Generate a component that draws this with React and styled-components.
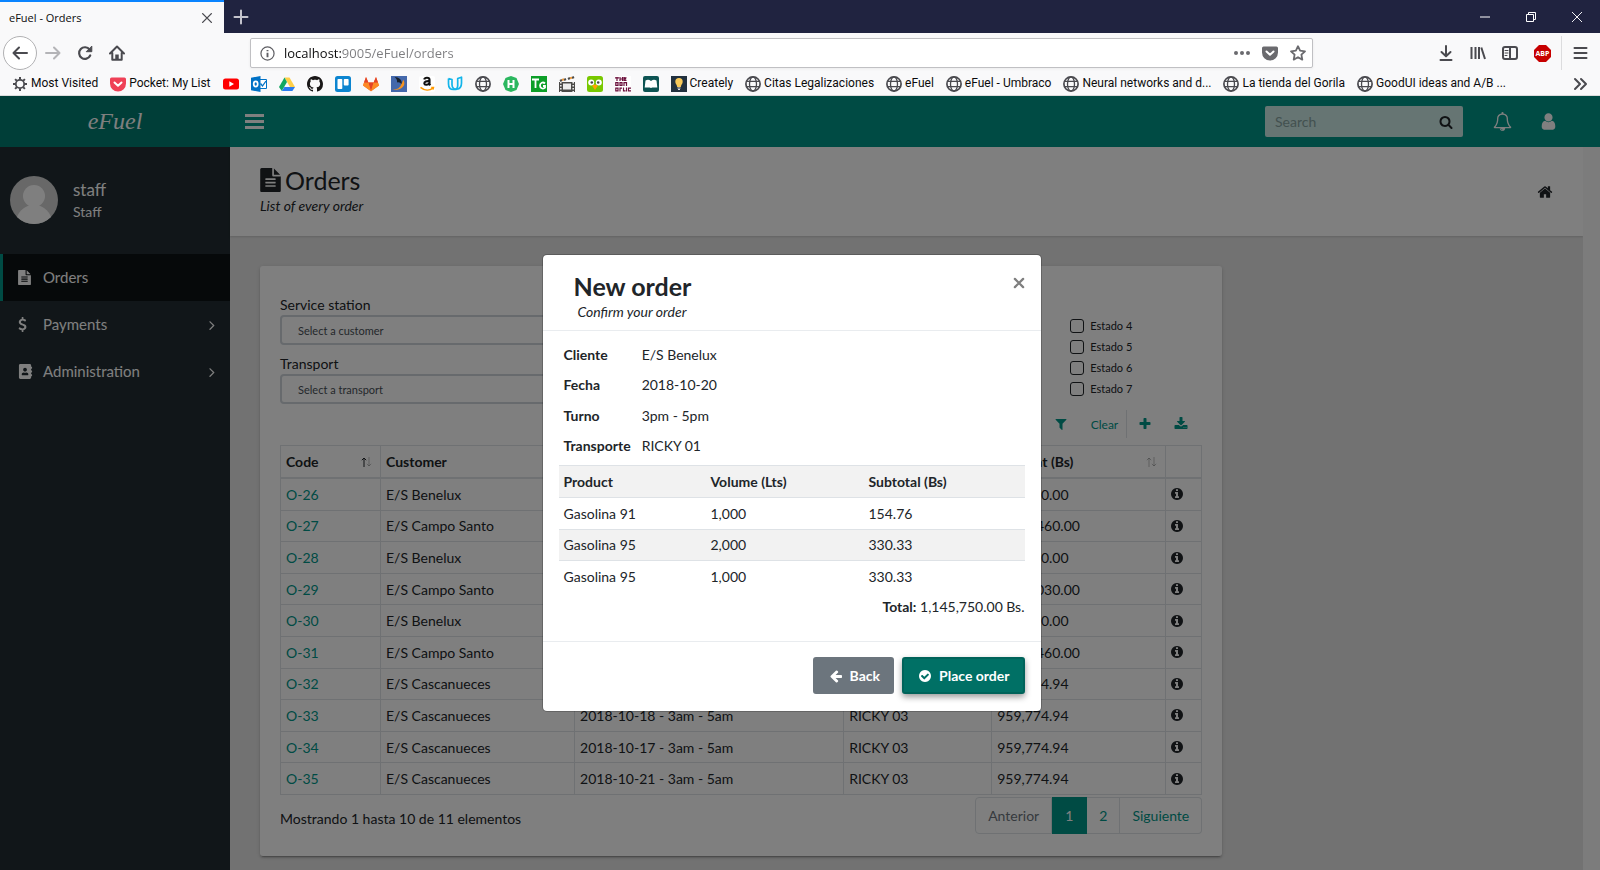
import React from "react";
import styled, { createGlobalStyle, css } from "styled-components";
import { FaAddressBook } from "react-icons/fa";

const GlobalStyle = createGlobalStyle`
  *, *::before, *::after { box-sizing: border-box; }
  html, body { margin: 0; }
  body {
    font-family: Lato, "Liberation Sans", sans-serif;
    font-size: 14px;
    line-height: 21px;
    color: #212529;
    overflow: hidden;
  }
  button, input, select { font: inherit; color: inherit; margin: 0; }
  button { background: none; border: 0; padding: 0; cursor: pointer; }
  a { text-decoration: none; color: inherit; }
  h1, h2, p { margin: 0; }
`;

/* ---------- icons ---------- */

const PATHS = {
  bell: "M912 1696q0-16-16-16-59 0-101.5-42.5t-42.5-101.5q0-16-16-16t-16 16q0 73 51.5 124.5t124.5 51.5q16 0 16-16zm-666-288h1300q-266-300-266-832 0-51-24-105t-69-103-121.5-80.5-169.5-31.5-169.5 31.5-121.5 80.5-69 103-24 105q0 532-266 832zm1482 0q0 52-38 90t-90 38h-448q0 106-75 181t-181 75-181-75-75-181h-448q-52 0-90-38t-38-90q50-42 91-88t85-119.5 74.5-158.5 50-206 19.5-260q0-152 117-282.5t307-158.5q-8-19-8-39 0-40 28-68t68-28 68 28 28 68q0 20-8 39 190 28 307 158.5t117 282.5q0 139 19.5 260t50 206 74.5 158.5 85 119.5 91 88z",
  user: "M1536 1399q0 109-62.5 187t-150.5 78h-854q-88 0-150.5-78t-62.5-187q0-85 8.5-160.5t31.5-152 58.5-131 94-89 134.5-34.5q131 128 313 128t313-128q76 0 134.5 34.5t94 89 58.5 131 31.5 152 8.5 160.5zm-256-887q0 159-112.5 271.5t-271.5 112.5-271.5-112.5-112.5-271.5 112.5-271.5 271.5-112.5 271.5 112.5 112.5 271.5z",
  search: "M1216 832q0-185-131.5-316.5t-316.5-131.5-316.5 131.5-131.5 316.5 131.5 316.5 316.5 131.5 316.5-131.5 131.5-316.5zm512 832q0 52-38 90t-90 38q-54 0-90-38l-343-342q-179 124-399 124-143 0-273.5-55.5t-225-150-150-225-55.5-273.5 55.5-273.5 150-225 225-150 273.5-55.5 273.5 55.5 225 150 150 225 55.5 273.5q0 220-124 399l343 343q37 37 37 90z",
  home: "M1472 992v480q0 26-19 45t-45 19h-384v-384h-256v384h-384q-26 0-45-19t-19-45v-480q0-1 .5-3t.5-3l575-474 575 474q1 2 1 6zm223-69l-62 74q-8 9-21 11h-3q-13 0-21-7l-692-577-692 577q-12 8-24 7-13-2-21-11l-62-74q-8-10-7-23.5t11-21.5l719-599q32-26 76-26t76 26l244 204v-195q0-14 9-23t23-9h192q14 0 23 9t9 23v408l219 182q10 8 11 21.5t-7 23.5z",
  file: "M1596 476q14 14 28 36h-472v-472q22 14 36 28zm-476 164h544v1056q0 40-28 68t-68 28h-1344q-40 0-68-28t-28-68v-1600q0-40 28-68t68-28h800v544q0 40 28 68t68 28zm160 736v-64q0-14-9-23t-23-9h-704q-14 0-23 9t-9 23v64q0 14 9 23t23 9h704q14 0 23-9t9-23zm0-256v-64q0-14-9-23t-23-9h-704q-14 0-23 9t-9 23v64q0 14 9 23t23 9h704q14 0 23-9t9-23zm0-256v-64q0-14-9-23t-23-9h-704q-14 0-23 9t-9 23v64q0 14 9 23t23 9h704q14 0 23-9t9-23z",
  info: "M1152 1376v-160q0-14-9-23t-23-9h-96v-512q0-14-9-23t-23-9h-320q-14 0-23 9t-9 23v160q0 14 9 23t23 9h96v320h-96q-14 0-23 9t-9 23v160q0 14 9 23t23 9h448q14 0 23-9t9-23zm-128-896v-160q0-14-9-23t-23-9h-192q-14 0-23 9t-9 23v160q0 14 9 23t23 9h192q14 0 23-9t9-23zm640 416q0 209-103 385.5t-279.5 279.5-385.5 103-385.5-103-279.5-279.5-103-385.5 103-385.5 279.5-279.5 385.5-103 385.5 103 279.5 279.5 103 385.5z",
  angle: "M1171 960q0 13-10 23l-466 466q-10 10-23 10t-23-10l-50-50q-10-10-10-23t10-23l393-393-393-393q-10-10-10-23t10-23l50-50q10-10 23-10t23 10l466 466q10 10 10 23z",
  filter: "M1595 295q17 41-14 70l-493 493v742q0 42-39 59-13 5-25 5-27 0-45-19l-256-256q-19-19-19-45v-486l-493-493q-31-29-14-70 17-39 59-39h1280q42 0 59 39z",
  plus: "M1600 736v192q0 40-28 68t-68 28h-416v416q0 40-28 68t-68 28h-192q-40 0-68-28t-28-68v-416h-416q-40 0-68-28t-28-68v-192q0-40 28-68t68-28h416v-416q0-40 28-68t68-28h192q40 0 68 28t28 68v416h416q40 0 68 28t28 68z",
  download: "M1344 1344q0-26-19-45t-45-19-45 19-19 45 19 45 45 19 45-19 19-45zm256 0q0-26-19-45t-45-19-45 19-19 45 19 45 45 19 45-19 19-45zm128-224v320q0 40-28 68t-68 28h-1472q-40 0-68-28t-28-68v-320q0-40 28-68t68-28h465l135 136q58 56 136 56t136-56l136-136h464q40 0 68 28t28 68zm-325-569q17 41-14 70l-448 448q-18 19-45 19t-45-19l-448-448q-31-29-14-70 17-39 59-39h256v-448q0-26 19-45t45-19h256q26 0 45 19t19 45v448h256q42 0 59 39z",
  arrowLeft: "M1664 896v128q0 53-32.5 90.5t-84.5 37.5h-704l293 294q38 36 38 90t-38 90l-75 76q-37 37-90 37-52 0-91-37l-651-652q-37-37-37-90 0-52 37-91l651-650q38-38 91-38 52 0 90 38l75 74q38 38 38 91t-38 91l-293 293h704q52 0 84.5 37.5t32.5 90.5z",
  check: "M1412 734q0-28-18-46l-91-90q-19-19-45-19t-45 19l-408 407-226-226q-19-19-45-19t-45 19l-91 90q-18 18-18 46 0 27 18 45l362 362q19 19 45 19 27 0 46-19l543-543q18-18 18-45zm252 162q0 209-103 385.5t-279.5 279.5-385.5 103-385.5-103-279.5-279.5-103-385.5 103-385.5 279.5-279.5 385.5-103 385.5 103 279.5 279.5 103 385.5z",
  dollar: "M1362 1185q0 153-99.5 263.5t-258.5 136.5v175q0 14-9 23t-23 9h-135q-13 0-22.5-9.5t-9.5-22.5v-175q-66-9-127.5-31t-101.5-44.5-74-48-46.5-37.5-17.5-18q-17-21-2-41l103-135q7-10 23-12 15-2 24 9l2 2q113 99 243 125 37 8 74 8 81 0 142.5-43t61.5-122q0-28-15-53t-33.5-42-58.5-37.5-66-32-80-32.5q-39-16-61.5-25t-61.5-26.5-62.5-31-56.5-35.5-53.5-42.5-43.5-49-35.5-58-21-66.5-8.5-78q0-138 98-242t255-134v-180q0-13 9.5-22.5t22.5-9.5h135q14 0 23 9t9 23v176q57 6 110.5 23t87 33.5 63.5 37.5 39 29 15 14q17 18 5 38l-81 146q-8 15-23 16-14 3-27-7-3-3-14.5-12t-39-26.5-58.5-32-74.5-26-85.5-11.5q-95 0-155 43t-60 111q0 26 8.5 48t29.5 41.5 39.5 33 56 31 60.5 27 70 27.5q53 20 81 31.5t76 35 75.5 42.5 62 50 53 63.5 31.5 76.5 13 94z",
};

function Icon({ name, size = 14, box = "0 0 1792 1792", width }) {
  return (
    <svg width={width || size} height={size} viewBox={box} fill="currentColor" aria-hidden="true">
      <path d={PATHS[name]} />
    </svg>
  );
}

const Line = ({ children, size = 16, w = 2, ...rest }) => (
  <svg width={size} height={size} viewBox="0 0 16 16" fill="none" stroke="currentColor" strokeWidth={w} strokeLinecap="round" strokeLinejoin="round" aria-hidden="true" {...rest}>
    {children}
  </svg>
);

const Fav = ({ children }) => (
  <svg width="16" height="16" viewBox="0 0 16 16" aria-hidden="true">{children}</svg>
);

const Globe = () => (
  <Fav>
    <g fill="none" stroke="#4a4a4f" strokeWidth="1.7">
      <circle cx="8" cy="8" r="7.1" />
      <ellipse cx="8" cy="8" rx="3.5" ry="7.1" strokeWidth="1.3" />
      <path d="M1.6 5.4h12.8M1.6 10.6h12.8" strokeWidth="1.3" />
    </g>
  </Fav>
);

const Gear = () => (
  <Fav>
    <g fill="none" stroke="#4a4a4f">
      <circle cx="8" cy="8" r="4.2" strokeWidth="1.8" />
      <path strokeWidth="2" d="M8 1v2.6M8 12.4V15M1 8h2.6M12.4 8H15M3.1 3.1l1.8 1.8M11.1 11.1l1.8 1.8M3.1 12.9l1.8-1.8M11.1 4.9l1.8-1.8" />
    </g>
  </Fav>
);

const PocketShape = "M1.6 1.5h12.8A1.6 1.6 0 0 1 16 3.1v4.4a8 8 0 0 1-16 0V3.1a1.6 1.6 0 0 1 1.6-1.6z";

const BOOKMARKS = [
  { label: "Most Visited", icon: <Gear /> },
  { label: "Pocket: My List", icon: <Fav><path fill="#ef4056" d={PocketShape} /><path d="M4.5 6.5 8 9.8l3.5-3.3" fill="none" stroke="#fff" strokeWidth="2" strokeLinecap="round" strokeLinejoin="round" /></Fav> },
  { title: "YouTube", icon: <Fav><rect y="2.5" width="16" height="11" rx="2.5" fill="#f00" /><path d="M6.3 5.3v5.4L11 8z" fill="#fff" /></Fav> },
  { title: "Outlook", icon: <Fav><path d="M9 3.500h6.500v9H9" fill="#fff" stroke="#0072c6" /><path d="M9.500 7.500l2 2.500 3.500-5" fill="none" stroke="#0072c6" strokeWidth="1.300" /><path d="M0 1.800 9.500 0v16L0 14.200z" fill="#0072c6" /><ellipse cx="4.700" cy="8" rx="2" ry="2.600" fill="none" stroke="#fff" strokeWidth="1.700" /></Fav> },
  { title: "Drive", icon: <Fav><path d="M5.500 1.500h5L16 11h-5z" fill="#ffcf48" /><path d="M5.500 1.500 8 6l-5.200 9L0 11z" fill="#11a861" /><path d="M5.400 11H16l-2.600 4H2.800z" fill="#2a7bf0" /></Fav> },
  { title: "GitHub", icon: <Fav><path fill="#191717" d="M8 0C3.58 0 0 3.58 0 8c0 3.54 2.29 6.53 5.47 7.59.4.07.55-.17.55-.38 0-.19-.01-.82-.01-1.49-2.01.37-2.53-.49-2.69-.94-.09-.23-.48-.94-.82-1.13-.28-.15-.68-.52-.01-.53.63-.01 1.08.58 1.23.82.72 1.21 1.87.87 2.33.66.07-.52.28-.87.51-1.07-1.78-.2-3.64-.89-3.64-3.95 0-.87.31-1.59.82-2.15-.08-.2-.36-1.02.08-2.12 0 0 .67-.21 2.2.82.64-.18 1.32-.27 2-.27s1.36.09 2 .27c1.53-1.04 2.2-.82 2.2-.82.44 1.1.16 1.92.08 2.12.51.56.82 1.27.82 2.15 0 3.07-1.87 3.75-3.65 3.95.29.25.54.73.54 1.48 0 1.07-.01 1.93-.01 2.2 0 .21.15.46.55.38A8.01 8.01 0 0 0 16 8c0-4.42-3.58-8-8-8z" /></Fav> },
  { title: "Trello", icon: <Fav><rect width="16" height="16" rx="2.500" fill="#0c85d0" /><rect x="2.500" y="3" width="4.800" height="10" rx=".8" fill="#fff" /><rect x="8.800" y="3" width="4.800" height="6.500" rx=".8" fill="#fff" /></Fav> },
  { title: "GitLab", icon: <Fav><path d="M3 1 0 9.400 8 15.200l8-5.800L13 1l-2.400 5.600H5.400z" fill="#fc6d26" /><path d="M5.400 6.600h5.200L8 15.200z" fill="#e24329" /><path d="M0 9.400l1-2.900 4.400.1L8 15.200zM16 9.400l-1-2.900-4.400.1L8 15.200z" fill="#fc8a26" /><path d="M3 1 1 6.500h4.400zM13 1l2 5.500h-4.400z" fill="#e24329" /></Fav> },
  { title: "Forum", icon: <Fav><rect width="16" height="16" fill="#4468ab" /><path d="M3.500 1c4 0 8.500 3 7 7.500C9.500 6.500 8 6 6 6.500 6.500 4.500 5.500 2.500 3.500 1z" fill="#17202c" /><path d="M12 3.500c4 5-1 11.500-10.500 10.500 5-.5 8-2.500 9-6 .8-1.500 1.500-3 1.500-4.500z" fill="#f7941e" /></Fav> },
  { title: "Amazon", icon: <Fav><rect width="16" height="16" rx="2" fill="#fff" /><path d="M5.200 3.500c.5-2.300 5.300-2.300 5.300.3v4.400l.9 1M10.500 5.200C7.500 5 5.200 5.500 5.300 7.500c.2 1.900 3.900 1.700 5.200-.6" fill="none" stroke="#111" strokeWidth="2.100" /><path d="M1.500 11.400c4 3.300 9 3.400 12.500.8M12.200 11.500h2.300l-.5 2" fill="none" stroke="#f90" strokeWidth="1.500" /></Fav> },
  { title: "Udacity", icon: <Fav><path d="M1.500 2.500v5.200c0 4 2.300 5.800 5 5.800M1.500 2.500l3.500 1v5.300c0 6.500 9.500 6 9.500-1.800V1.200l-3.800 1.300v7.200c0 2.500-1.700 3.800-4.200 3.800" fill="none" stroke="#13b5ea" strokeWidth="1.700" strokeLinejoin="round" /></Fav> },
  { title: "Local site", icon: <Globe /> },
  { title: "HackerRank", icon: <Fav><path d="M8 0l5.500 2L16 8l-2.500 6L8 16l-5.500-2L0 8l2.500-6z" fill="#2bb75f" /><path d="M5.500 4v8M10.500 4v8M5.500 8h5" stroke="#fff" strokeWidth="2" /></Fav> },
  { title: "TG", icon: <Fav><rect width="16" height="16" fill="#0d9f28" /><path d="M1 3.500h7M4.500 3.500V12M14 7.500c-2-2-5-.7-5 2s3 4 5 2.200V10h-2" fill="none" stroke="#fff" strokeWidth="1.800" /></Fav> },
  { title: "Movies", icon: <Fav><path d="M0 6h16v10H0z" fill="#4b4a48" /><rect x="4" y="7.500" width="8" height="6" fill="#ececec" /><path d="M1.800 6v10M14.200 6v10" stroke="#f2f2f2" strokeWidth="1.500" strokeDasharray="1.500 1.500" /><path d="M1 5l2-1M5 4l2-1M9 3l2-1M13 2l2-1" stroke="#4b4a48" strokeWidth="2" /><path d="M3 4l2-.7M11 2.300l2-.7" stroke="#e8963a" strokeWidth="2" /></Fav> },
  { title: "Duolingo", icon: <Fav><rect width="16" height="16" rx="2.500" fill="#78c800" /><circle cx="4.200" cy="6.500" r="3" fill="#fff" /><circle cx="11.800" cy="6.500" r="3" fill="#fff" /><circle cx="4.800" cy="6.500" r="1.300" fill="#444" /><circle cx="11.200" cy="6.500" r="1.300" fill="#444" /><path d="M5 9.500 8 8.500l3 1L8 14z" fill="#ffa200" /></Fav> },
  { title: "The Book of Life", icon: <Fav><rect width="16" height="16" fill="#fff" /><path d="M0 1.800h4M2 1v4M5 1v4M7.500 1v4M5 3h2.500M9 1v4M9 1.800h2.500M9 4.300h2.500M9 3h2M.8 6v4M3 6v4M.8 6.600h2.200M.8 9.400h2.200M5 6v4M7 6v4M5 6.600h2M5 9.400h2M9 6v4M11.500 6v4M9 6.600h2.500M.8 11.500v4M3 11.500v4M.8 12.100h2.200M.8 14.900h2.200M5 11.500v4M5 12.100h2M8.500 11.500v4M8.500 14.900h2M11.500 11.500v4M13.500 11.500v4M13.500 12.100h2.500M13.500 14.900h2.500" fill="none" stroke="#6b0f3b" strokeWidth="1.200" /></Fav> },
  { title: "Reader", icon: <Fav><rect width="16" height="16" rx="2" fill="#0d5453" /><path d="M2.500 4.500c2-1 3.500-1 5.500.5 2-1.500 3.500-1.500 5.500-.5l.8 7h-5L8 12l-1.300-.5h-5z" fill="#fff" /></Fav> },
  { label: "Creately", icon: <Fav><rect width="16" height="16" fill="#22313f" /><path d="M8 2a3.700 3.700 0 0 1 3.700 3.700C11.700 8 10 8.500 9.800 11H6.200C6 8.500 4.300 8 4.300 5.700A3.700 3.700 0 0 1 8 2z" fill="#f7c95a" /><path d="M6.500 12h3M7 13.500h2" stroke="#ddd" /></Fav> },
  { label: "Citas Legalizaciones", icon: <Globe /> },
  { label: "eFuel", icon: <Globe /> },
  { label: "eFuel - Umbraco", icon: <Globe /> },
  { label: "Neural networks and d...", icon: <Globe /> },
  { label: "La tienda del Gorila", icon: <Globe /> },
  { label: "GoodUI ideas and A/B ...", icon: <Globe /> },
];

/* ---------- browser frame ---------- */

const Window = styled.div`
  display: flex;
  flex-direction: column;
  height: 100vh;
`;

const Chrome = styled.header`
  flex: none;
  display: flex;
  flex-direction: column;
  height: 96px;
  background: #f9f9fa;
  border-bottom: 1px solid #dcdcdc;
  font-family: "Open Sans", "Noto Sans", sans-serif;
  font-size: 12px;
  color: #0c0c0d;
`;

const TabStrip = styled.div`
  display: flex;
  height: 33px;
  background: #202340;
  color: #d2d2d8;
`;

const Tab = styled.div`
  display: flex;
  align-items: center;
  justify-content: space-between;
  width: 224px;
  padding: 0 9px;
  background: #f9f9fa;
  border-top: 2px solid #0a84ff;
  color: #0c0c0d;
  font-size: 11px;
`;

const ChromeButton = styled.button`
  display: flex;
  align-items: center;
  justify-content: center;
  flex: none;
  width: ${(p) => p.$w || 32}px;
  color: ${(p) => p.$color || "#4a4a4f"};
`;

const WindowButtons = styled.div`
  display: flex;
  margin-left: auto;
`;

const NavBar = styled.div`
  display: flex;
  align-items: center;
  height: 40px;
  padding: 0 3px;
`;

const NavGroup = styled.div`
  display: flex;
  align-items: center;
  width: ${(p) => p.$w}px;
  flex: none;
`;

const BackButton = styled(ChromeButton)`
  width: 34px;
  height: 34px;
  border: 1px solid #b1b1b3;
  border-radius: 50%;
  background: #fff;
`;

const AddressBar = styled.div`
  display: flex;
  align-items: center;
  flex: 1;
  height: 30px;
  padding: 0 0 0 9px;
  background: #fff;
  border: 1px solid #c0c0c3;
  border-radius: 2px;
  box-shadow: 0 1px 3px rgba(0, 0, 0, 0.06);
  color: #5f5f64;
`;

const Address = styled.input`
  flex: 1;
  min-width: 0;
  height: 24px;
  margin-left: 9px;
  padding: 0;
  border: 0;
  outline: 0;
  font-size: 13px;
  background: linear-gradient(90deg, #0c0c0d 57px, #7d7d80 57px);
  background-clip: text;
  -webkit-background-clip: text;
  -webkit-text-fill-color: transparent;
`;

const Tools = styled(NavGroup)`
  justify-content: flex-end;
`;

const Menu = styled(ChromeButton)`
  height: 34px;
  margin-left: 3px;
  border-left: 1px solid #dcdcde;
`;

const Bookmarks = styled.nav`
  display: flex;
  align-items: center;
  gap: 12px;
  height: 21px;
  padding: 0 12px;
  font-family: Roboto, "Open Sans", sans-serif;
`;

const Bookmark = styled.a`
  display: flex;
  align-items: center;
  gap: 3px;
  white-space: nowrap;
  svg { flex: none; }
`;

const MoreBookmarks = styled(ChromeButton)`
  margin-left: auto;
`;

function Browser() {
  return (
    <Chrome>
      <TabStrip>
        <Tab>
          eFuel - Orders
          <ChromeButton $w={16} aria-label="Close tab"><Line size={14} w={1.600}><path d="M3 3l10 10M13 3 3 13" /></Line></ChromeButton>
        </Tab>
        <ChromeButton $w={34} $color="#c4c4cd" aria-label="New tab"><Line size={16}><path d="M8 1.500v13M1.500 8h13" /></Line></ChromeButton>
        <WindowButtons>
          <ChromeButton $w={46} $color="#fff" aria-label="Minimize"><Line size={10} w={1.600}><path d="M0 8h16" /></Line></ChromeButton>
          <ChromeButton $w={46} $color="#fff" aria-label="Restore">
            <svg width="10" height="10" fill="none" stroke="currentColor" aria-hidden="true"><path d="M.5 2.500h7v7h-7zM2.500 2.500v-2h7v7h-2" /></svg>
          </ChromeButton>
          <ChromeButton $w={46} $color="#fff" aria-label="Close window"><Line size={10} w={1.500}><path d="M0 0l16 16M16 0 0 16" /></Line></ChromeButton>
        </WindowButtons>
      </TabStrip>
      <NavBar>
        <NavGroup $w={247}>
          <BackButton aria-label="Back"><Line><path d="M15 8H1.500M7 2.500 1.500 8 7 13.500" /></Line></BackButton>
          <ChromeButton $color="#b4b4b7" aria-label="Forward"><Line><path d="M1 8h13.500M9 2.500 14.500 8 9 13.500" /></Line></ChromeButton>
          <ChromeButton aria-label="Reload"><Line w={2.200}><path d="M13.200 10.500A5.800 5.800 0 1 1 12.600 4.600" /><path d="M14.800 1.500v5.200H9.600z" fill="currentColor" strokeWidth="1" /></Line></ChromeButton>
          <ChromeButton aria-label="Home"><Line><path d="M1 8.500 8 1.500l7 7M3.300 8v6.800h9.400V8" /><path d="M8 14v-4.500" strokeWidth="3.500" strokeLinecap="butt" /></Line></ChromeButton>
        </NavGroup>
        <AddressBar>
          <Line size={15} w={1.300}><circle cx="8" cy="8" r="7" /><path d="M8 7.200V12M8 4.200v1.500" strokeWidth="2" strokeLinecap="butt" /></Line>
          <Address aria-label="Address" defaultValue="localhost:9005/eFuel/orders" />
          <ChromeButton $w={28} $color="#6a6a6e" aria-label="Page actions"><svg width="16" height="16" fill="currentColor" aria-hidden="true"><circle cx="2" cy="8" r="2" /><circle cx="8" cy="8" r="2" /><circle cx="14" cy="8" r="2" /></svg></ChromeButton>
          <ChromeButton $w={28} $color="#6a6a6e" aria-label="Save to Pocket"><svg width="16" height="16" aria-hidden="true"><path fill="currentColor" d={PocketShape} /><path d="M4.500 6.500 8 9.800l3.500-3.300" fill="none" stroke="#fff" strokeWidth="2" strokeLinecap="round" strokeLinejoin="round" /></svg></ChromeButton>
          <ChromeButton $w={28} $color="#6a6a6e" aria-label="Bookmark page"><Line w={1.800}><path d="M8 1.200l2.100 4.500 4.900.6-3.600 3.400.9 4.900L8 12.200l-4.300 2.400.9-4.900L1 6.300l4.900-.6z" /></Line></ChromeButton>
        </AddressBar>
        <Tools $w={284}>
          <ChromeButton aria-label="Downloads"><Line><path d="M8 1v10M3.500 7 8 11.300 12.500 7M2.500 15h11" /></Line></ChromeButton>
          <ChromeButton aria-label="Library"><Line><path d="M1.500 2v12M5.500 2v12M9 2v12M11.300 2.500l3.700 11.500" strokeLinecap="butt" /></Line></ChromeButton>
          <ChromeButton aria-label="Sidebars"><Line w={2}><rect x="1" y="2" width="14" height="12" rx="2" /><path d="M8 2v12" /><path d="M3 5.500h3M3 8h3M3 10.500h2" strokeWidth="1" /></Line></ChromeButton>
          <ChromeButton aria-label="Adblock Plus">
            <svg width="17" height="17" viewBox="0 0 17 17" aria-hidden="true">
              <path d="M5 0h7l5 5v7l-5 5H5l-5-5V5z" fill="#c70000" />
              <text x="8.500" y="11" textAnchor="middle" fontSize="7" fontWeight="700" fontFamily="Open Sans, sans-serif" fill="#fff">ABP</text>
            </svg>
          </ChromeButton>
          <Menu $w={36} aria-label="Menu"><Line><path d="M2.500 3h12M2.500 8h12M2.500 13h12" /></Line></Menu>
        </Tools>
      </NavBar>
      <Bookmarks aria-label="Bookmarks">
        {BOOKMARKS.map((b, i) => (
          <Bookmark key={i} href="#" aria-label={b.label || b.title}>
            {b.icon}
            {b.label}
          </Bookmark>
        ))}
        <MoreBookmarks $w={16} aria-label="More bookmarks"><Line><path d="M3 3l5 5-5 5M9 3l5 5-5 5" /></Line></MoreBookmarks>
      </Bookmarks>
    </Chrome>
  );
}

/* ---------- application shell ---------- */

const Viewport = styled.div`
  position: relative;
  display: flex;
  flex-direction: column;
  flex: 1;
  min-height: 0;
  overflow: hidden;
`;

const TopBar = styled.header`
  flex: none;
  display: flex;
  align-items: center;
  height: 51px;
  background: #009688;
  color: #fff;
`;

const Logo = styled.a`
  display: flex;
  align-items: center;
  justify-content: center;
  align-self: stretch;
  width: 230px;
  background: #007d71;
  font-family: "Liberation Serif", serif;
  font-style: italic;
  font-size: 24px;
`;

const ToggleButton = styled.button`
  display: flex;
  padding: 0 15px;
  color: #fff;
`;

const Search = styled.form`
  display: flex;
  align-items: center;
  width: 198px;
  height: 31px;
  margin-left: auto;
  padding: 0 10px;
  border-radius: 2px;
  background: rgba(255, 255, 255, 0.8);
  color: #212529;
`;

const SearchInput = styled.input`
  flex: 1;
  min-width: 0;
  padding: 0;
  border: 0;
  outline: 0;
  background: none;
  &::placeholder { color: #86a3a0; opacity: 1; }
`;

const SearchButton = styled.button`
  display: flex;
`;

const HeaderActions = styled.div`
  display: flex;
  padding: 0 29px 0 16px;
`;

const HeaderButton = styled.button`
  display: flex;
  justify-content: center;
  width: 46px;
  color: #fff;
`;

const Body = styled.div`
  display: flex;
  flex: 1;
  min-height: 0;
`;

const Sidebar = styled.aside`
  flex: none;
  width: 230px;
  padding-top: 29px;
  background: #222d32;
  color: #fff;
`;

const Profile = styled.div`
  display: flex;
  align-items: center;
  gap: 15px;
  padding: 0 10px;
  margin-bottom: 30px;
`;

const ProfileName = styled.p`
  font-size: 17px;
  line-height: 22px;
`;

const NavItem = styled.a`
  display: flex;
  align-items: center;
  gap: 9px;
  height: 47px;
  padding: 0 10px 0 15px;
  border-left: 3px solid ${(p) => (p.$active ? "#009688" : "transparent")};
  background: ${(p) => (p.$active ? "#0d1214" : "none")};
  font-size: 15px;
`;

const NavIcon = styled.span`
  display: flex;
  width: 16px;
`;

const NavLabel = styled.span`
  flex: 1;
`;

const Main = styled.main`
  flex: 1;
  min-width: 0;
  background: #e5e5e5;
`;

const ScrollTrack = styled.div`
  flex: none;
  width: 17px;
  background: #f8f8f8;
`;

const PageHeader = styled.div`
  display: flex;
  align-items: center;
  justify-content: space-between;
  height: 89px;
  padding: 0 30px;
  background: #fff;
  box-shadow: 0 1px 2px rgba(0, 0, 0, 0.15);
`;

const PageHeading = styled.div`
  padding-bottom: 2px;
`;

const PageTitle = styled.h1`
  display: flex;
  align-items: center;
  gap: 4px;
  font-size: 25px;
  font-weight: 400;
  line-height: 29px;
`;

const HomeLink = styled.a`
  display: flex;
`;

const Subtitle = styled.p`
  font-style: italic;
`;

const PageGrid = styled.div`
  display: grid;
  grid-template-columns: repeat(12, minmax(0, 1fr));
  gap: 30px;
  padding: 30px;
`;

const Tile = styled.section`
  grid-column: span 9;
  padding: 20px 20px 22px;
  background: #fff;
  border-radius: 3px;
  box-shadow: 0 2px 2px rgba(0, 0, 0, 0.14), 0 3px 1px -2px rgba(0, 0, 0, 0.2), 0 1px 5px rgba(0, 0, 0, 0.12);
`;

const Filters = styled.div`
  display: flex;
  justify-content: space-between;
  padding: 8px 0 6px;
`;

const Fields = styled.div`
  display: flex;
  flex-direction: column;
  gap: 8px;
  width: 50%;
`;

const Field = styled.label`
  display: block;
`;

const Select = styled.select`
  display: block;
  appearance: none;
  width: 100%;
  height: 30px;
  padding: 0 16px;
  border: 2px solid #ced4da;
  border-radius: 4px;
  background: #fff;
  color: #495057;
  font-size: 11px;
`;

const CheckList = styled.div`
  width: 132px;
  padding-top: 21px;
`;

const CheckRow = styled.label`
  display: flex;
  align-items: center;
  gap: 6px;
  height: 21px;
  font-size: 11px;
`;

const Check = styled.input`
  appearance: none;
  width: 14px;
  height: 14px;
  border: 1px solid #212529;
  border-radius: 3px;
`;

const Toolbar = styled.div`
  display: flex;
  justify-content: flex-end;
  height: 28px;
  margin-bottom: 7px;
  padding-right: 3px;
  color: #009688;
`;

const ToolButton = styled.button`
  display: flex;
  align-items: center;
  justify-content: center;
  min-width: 36px;
  color: inherit;
  font-size: 12px;
  ${(p) => p.$text && css`
    padding: 0 8px 0 12px;
    border-right: 1px solid #dee2e6;
  `}
`;

const OrdersTable = styled.table`
  width: 100%;
  height: 350px;
  table-layout: fixed;
  border-collapse: collapse;
  th, td {
    padding: 4px 5px;
    border: 1px solid #dee2e6;
    text-align: left;
  }
  th {
    padding-top: 5px;
    padding-bottom: 5px;
    border-bottom-width: 2px;
    font-weight: 700;
  }
  td:last-child { padding-left: 4px; }
  td:last-child svg { display: block; }
`;

const Heading = styled.div`
  display: flex;
  align-items: center;
  justify-content: space-between;
  padding-right: 3px;
`;

const CodeLink = styled.a`
  color: #009688;
`;

const TableFooter = styled.div`
  display: flex;
  align-items: center;
  justify-content: space-between;
  padding-top: 2px;
`;

const TableInfo = styled.p`
  padding-top: 6px;
`;

const Pager = styled.nav`
  display: flex;
`;

const PageLink = styled.a`
  padding: 7px 12px;
  border: 1px solid #dee2e6;
  border-left-width: ${(p) => (p.$first ? 1 : 0)}px;
  border-radius: ${(p) => (p.$first ? "4px 0 0 4px" : p.$last ? "0 4px 4px 0" : "0")};
  color: ${(p) => (p.$active ? "#fff" : p.$first ? "#6c757d" : "#009688")};
  ${(p) => p.$active && css`
    background: #009688;
    border-color: #009688;
    padding: 7px 13px;
  `}
`;

/* ---------- modal ---------- */

const Backdrop = styled.div`
  position: absolute;
  inset: 0;
  display: flex;
  align-items: center;
  justify-content: center;
  padding-right: 17px;
  background: rgba(0, 0, 0, 0.5);
`;

const Dialog = styled.section`
  width: 500px;
  background: #fff;
  background-clip: padding-box;
  border: 1px solid rgba(0, 0, 0, 0.2);
  border-radius: 5px;
`;

const DialogHeader = styled.header`
  display: flex;
  justify-content: space-between;
  align-items: flex-start;
  height: 76px;
  padding: 16px 16px 0 31px;
  border-bottom: 1px solid #e9ecef;
`;

const DialogTitle = styled.h2`
  font-size: 25px;
  line-height: 30px;
  font-weight: 700;
`;

const DialogSubtitle = styled(Subtitle)`
  padding-left: 4px;
`;

const CloseButton = styled.button`
  display: flex;
  width: 12px;
  margin-top: 6px;
  color: #7f7f7f;
`;

const DialogBody = styled.div`
  padding: 8px 16px 24px;
  border-bottom: 1px solid #e9ecef;
`;

const Details = styled.table`
  height: 122px;
  margin-bottom: 4px;
  border-collapse: collapse;
  th, td { padding: 4px 5px; text-align: left; }
  th { padding-right: 6px; }
`;

const Products = styled.table`
  width: 100%;
  height: 127px;
  table-layout: fixed;
  border-collapse: collapse;
  th, td {
    padding: 4px 5px;
    border-top: 1px solid #dee2e6;
    text-align: left;
  }
  tr:nth-child(odd) { background: #f2f2f2; }
`;

const Total = styled.p`
  padding-top: 4px;
  text-align: right;
`;

const DialogFooter = styled.footer`
  display: flex;
  justify-content: flex-end;
  gap: 8px;
  padding: 15px 16px 17px;
`;

const Button = styled.button`
  display: flex;
  align-items: center;
  gap: 7px;
  height: 37px;
  padding: 0 12px 0 14px;
  border: 2px solid #6c757d;
  border-radius: 3px;
  background: #6c757d;
  color: #fff;
  font-weight: 700;
  ${(p) => p.$primary && css`
    padding-right: 13px;
    background: #007065;
    border-color: #00635a;
    box-shadow: 0 3px 6px rgba(0, 0, 0, 0.4);
  `}
`;

/* ---------- data ---------- */

const ORDERS = [
  ["O-26", "E/S Benelux", "", "", "154,760.00"],
  ["O-27", "E/S Campo Santo", "", "", "1,145,460.00"],
  ["O-28", "E/S Benelux", "", "", "154,760.00"],
  ["O-29", "E/S Campo Santo", "", "", "1,146,030.00"],
  ["O-30", "E/S Benelux", "", "", "154,760.00"],
  ["O-31", "E/S Campo Santo", "", "", "1,145,460.00"],
  ["O-32", "E/S Cascanueces", "", "", "959,774.94"],
  ["O-33", "E/S Cascanueces", "2018-10-18 - 3am - 5am", "RICKY 03", "959,774.94"],
  ["O-34", "E/S Cascanueces", "2018-10-17 - 3am - 5am", "RICKY 03", "959,774.94"],
  ["O-35", "E/S Cascanueces", "2018-10-21 - 3am - 5am", "RICKY 03", "959,774.94"],
];

const COLUMNS = [
  ["Code", 100], ["Customer", 194], ["Date", 269], ["Transport", 148], ["Amount (Bs)", 174],
];

const STATES = ["Estado 4", "Estado 5", "Estado 6", "Estado 7"];

const DETAILS = [
  ["Cliente", "E/S Benelux"], ["Fecha", "2018-10-20"], ["Turno", "3pm - 5pm"], ["Transporte", "RICKY 01"],
];

const PRODUCTS = [
  ["Gasolina 91", "1,000", "154.76"], ["Gasolina 95", "2,000", "330.33"], ["Gasolina 95", "1,000", "330.33"],
];

const SortIcon = ({ active }) => (
  <svg width="11" height="10" viewBox="0 0 11 10" fill="none" stroke="currentColor" aria-hidden="true">
    <path d="M3 10V1M.8 3.200 3 1l2.200 2.200" opacity={active ? 1 : 0.3} />
    <path d="M8 0v9M5.800 6.800 8 9l2.200-2.200" opacity="0.3" />
  </svg>
);

function Orders() {
  return (
    <Tile>
      <Filters>
        <Fields>
          <Field>Service station
            <Select><option>Select a customer</option></Select>
          </Field>
          <Field>Transport
            <Select><option>Select a transport</option></Select>
          </Field>
        </Fields>
        <CheckList>
          {STATES.map((s) => <CheckRow key={s}><Check type="checkbox" />{s}</CheckRow>)}
        </CheckList>
      </Filters>
      <Toolbar>
        <ToolButton aria-label="Filter"><Icon name="filter" /></ToolButton>
        <ToolButton $text>Clear</ToolButton>
        <ToolButton aria-label="Add order"><Icon name="plus" /></ToolButton>
        <ToolButton aria-label="Download"><Icon name="download" /></ToolButton>
      </Toolbar>
      <OrdersTable>
        <colgroup>
          {COLUMNS.map(([name, w]) => <col key={name} width={w} />)}
          <col width="36" />
        </colgroup>
        <thead>
          <tr>
            {COLUMNS.map(([name], i) => (
              <th key={name}>
                <Heading>{name}<SortIcon active={i === 0} /></Heading>
              </th>
            ))}
            <th aria-label="Details" />
          </tr>
        </thead>
        <tbody>
          {ORDERS.map(([code, ...rest]) => (
            <tr key={code}>
              <td><CodeLink href="#">{code}</CodeLink></td>
              {rest.map((c, i) => <td key={i}>{c}</td>)}
              <td><Icon name="info" /></td>
            </tr>
          ))}
        </tbody>
      </OrdersTable>
      <TableFooter>
        <TableInfo>Mostrando 1 hasta 10 de 11 elementos</TableInfo>
        <Pager aria-label="Pages">
          <PageLink href="#" $first>Anterior</PageLink>
          <PageLink href="#" $active>1</PageLink>
          <PageLink href="#">2</PageLink>
          <PageLink href="#" $last>Siguiente</PageLink>
        </Pager>
      </TableFooter>
    </Tile>
  );
}

function OrderDialog() {
  return (
    <Backdrop>
      <Dialog role="dialog" aria-label="New order">
        <DialogHeader>
          <div>
            <DialogTitle>New order</DialogTitle>
            <DialogSubtitle>Confirm your order</DialogSubtitle>
          </div>
          <CloseButton aria-label="Close"><Line size={12} w={3}><path d="M2.500 2.500l11 11M13.500 2.500l-11 11" /></Line></CloseButton>
        </DialogHeader>
        <DialogBody>
          <Details>
            <tbody>
              {DETAILS.map(([k, v]) => <tr key={k}><th scope="row">{k}</th><td>{v}</td></tr>)}
            </tbody>
          </Details>
          <Products>
            <colgroup><col width="147" /><col width="158" /><col width="161" /></colgroup>
            <tbody>
              <tr><th>Product</th><th>Volume (Lts)</th><th>Subtotal (Bs)</th></tr>
              {PRODUCTS.map((row, i) => <tr key={i}>{row.map((c, j) => <td key={j}>{c}</td>)}</tr>)}
            </tbody>
          </Products>
          <Total><b>Total:</b> 1,145,750.00 Bs.</Total>
        </DialogBody>
        <DialogFooter>
          <Button><Icon name="arrowLeft" />Back</Button>
          <Button $primary><Icon name="check" />Place order</Button>
        </DialogFooter>
      </Dialog>
    </Backdrop>
  );
}

export default function App() {
  return (
    <Window>
      <GlobalStyle />
      <Browser />
      <Viewport>
        <TopBar>
          <Logo href="#">eFuel</Logo>
          <ToggleButton aria-label="Toggle sidebar">
            <svg width="19" height="15" fill="currentColor" aria-hidden="true"><path d="M0 0h19v3H0zM0 6h19v3H0zM0 12h19v3H0z" /></svg>
          </ToggleButton>
          <Search>
            <SearchInput type="text" placeholder="Search" aria-label="Search" />
            <SearchButton type="button" aria-label="Search"><Icon name="search" /></SearchButton>
          </Search>
          <HeaderActions>
            <HeaderButton aria-label="Notifications"><Icon name="bell" size={19} /></HeaderButton>
            <HeaderButton aria-label="Account"><Icon name="user" size={19} /></HeaderButton>
          </HeaderActions>
        </TopBar>
        <Body>
          <Sidebar>
            <Profile>
              <svg width="48" height="48" viewBox="0 0 48 48" aria-hidden="true">
                <clipPath id="avatar"><circle cx="24" cy="24" r="24" /></clipPath>
                <g clipPath="url(#avatar)">
                  <rect width="48" height="48" fill="#d0d0d0" />
                  <circle cx="24" cy="20" r="11" fill="#fff" />
                  <ellipse cx="24" cy="47" rx="18" ry="18" fill="#fff" />
                </g>
              </svg>
              <div>
                <ProfileName>staff</ProfileName>
                <p>Staff</p>
              </div>
            </Profile>
            <nav aria-label="Main">
              <NavItem href="#" $active>
                <NavIcon><Icon name="file" size={15} width={13} box="128 0 1536 1792" /></NavIcon>
                <NavLabel>Orders</NavLabel>
              </NavItem>
              <NavItem href="#">
                <NavIcon><Icon name="dollar" size={15} width={9} box="384 0 1024 1792" /></NavIcon>
                <NavLabel>Payments</NavLabel>
                <Icon name="angle" size={16} />
              </NavItem>
              <NavItem href="#">
                <NavIcon><FaAddressBook size={15} /></NavIcon>
                <NavLabel>Administration</NavLabel>
                <Icon name="angle" size={16} />
              </NavItem>
            </nav>
          </Sidebar>
          <Main>
            <PageHeader>
              <PageHeading>
                <PageTitle><Icon name="file" size={24} width={21} box="128 0 1536 1792" />Orders</PageTitle>
                <Subtitle>List of every order</Subtitle>
              </PageHeading>
              <HomeLink href="#" aria-label="Home"><Icon name="home" size={16} /></HomeLink>
            </PageHeader>
            <PageGrid><Orders /></PageGrid>
          </Main>
          <ScrollTrack />
        </Body>
        <OrderDialog />
      </Viewport>
    </Window>
  );
}
